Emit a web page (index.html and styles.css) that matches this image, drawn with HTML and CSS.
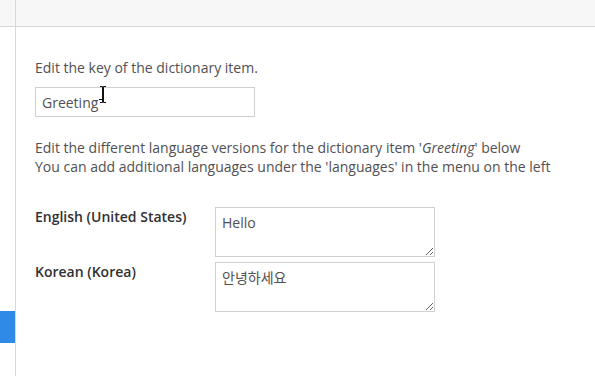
FILE: index.html
```html
<!DOCTYPE html>
<html>
<head>
<meta charset="utf-8">
<link rel="stylesheet" href="styles.css">
</head>
<body>
<div class="app">
  <aside class="sidebar">
    <div class="sidebar-top"></div>
    <div class="sidebar-active"></div>
  </aside>
  <main class="main">
    <header class="header"></header>
    <section class="content">
      <p class="intro">Edit the key of the dictionary item.</p>
      <div class="key-wrap">
        <input class="key-input" type="text" value="Greeting">
        <svg class="ibeam" width="8" height="17" viewBox="0 0 8 17"><path d="M1 0.5h2.5v16h-2.5M7 0.5h-2.5v16h2.5M0 13.5h3.5" fill="none" stroke="#111" stroke-width="1"/></svg>
      </div>
      <p class="desc">Edit the different language versions for the dictionary item '<em>Greeting</em>' below<br>You can add additional languages under the 'languages' in the menu on the left</p>
      <div class="row">
        <label class="lang">English (United States)</label>
        <textarea class="value">Hello</textarea>
      </div>
      <div class="row">
        <label class="lang">Korean (Korea)</label>
        <textarea class="value">안녕하세요</textarea>
      </div>
    </section>
  </main>
</div>
</body>
</html>
```
FILE: styles.css
```css
* { box-sizing: border-box; }
html, body { margin: 0; padding: 0; background: #fff; }
body {
  font-family: "Open Sans", "Noto Sans CJK KR", sans-serif;
  font-size: 14px;
  color: #515054;
  width: 595px;
  height: 376px;
  overflow: hidden;
}
.app { display: flex; height: 376px; }
.sidebar {
  width: 16px;
  flex: none;
  border-right: 1px solid #d8d8d8;
  display: flex;
  flex-direction: column;
}
.sidebar-top {
  height: 27px;
  background: #f7f7f7;
  border-bottom: 1px solid #d8d8d8;
}
.sidebar-active {
  margin-top: 284px;
  height: 32px;
  width: 15px;
  background: #2e8ae6;
}
.main { flex: 1; display: flex; flex-direction: column; }
.header {
  height: 27px;
  background: #f7f7f7;
  border-bottom: 1px solid #d8d8d8;
}
.content { padding: 31px 0 0 19px; }
.intro { margin: 0 0 9px; line-height: 20px; }
.key-wrap { position: relative; width: 220px; }
.key-input {
  display: block;
  width: 220px;
  height: 30px;
  border: 1px solid #d0d0d0;
  padding: 0 6px;
  font-family: "Open Sans", sans-serif;
  font-size: 14px;
  color: #515054;
  background: #fff;
  outline: none;
}
.ibeam { position: absolute; left: 64px; top: -1px; }
.desc { margin: 21px 0 31px; line-height: 19px; }
.desc em { font-style: italic; }
.row { display: flex; margin-bottom: 5px; }
.lang {
  width: 180px;
  flex: none;
  font-weight: 600;
  padding-top: 0;
  line-height: 19px;
  color: #303033;
}
.value {
  display: block;
  width: 220px;
  height: 50px;
  border: 1px solid #d0d0d0;
  padding: 5px 6px;
  font-family: "Open Sans", "Noto Sans CJK KR", sans-serif;
  font-size: 14px;
  color: #515054;
  resize: vertical;
  outline: none;
  line-height: 20px;
}
```
